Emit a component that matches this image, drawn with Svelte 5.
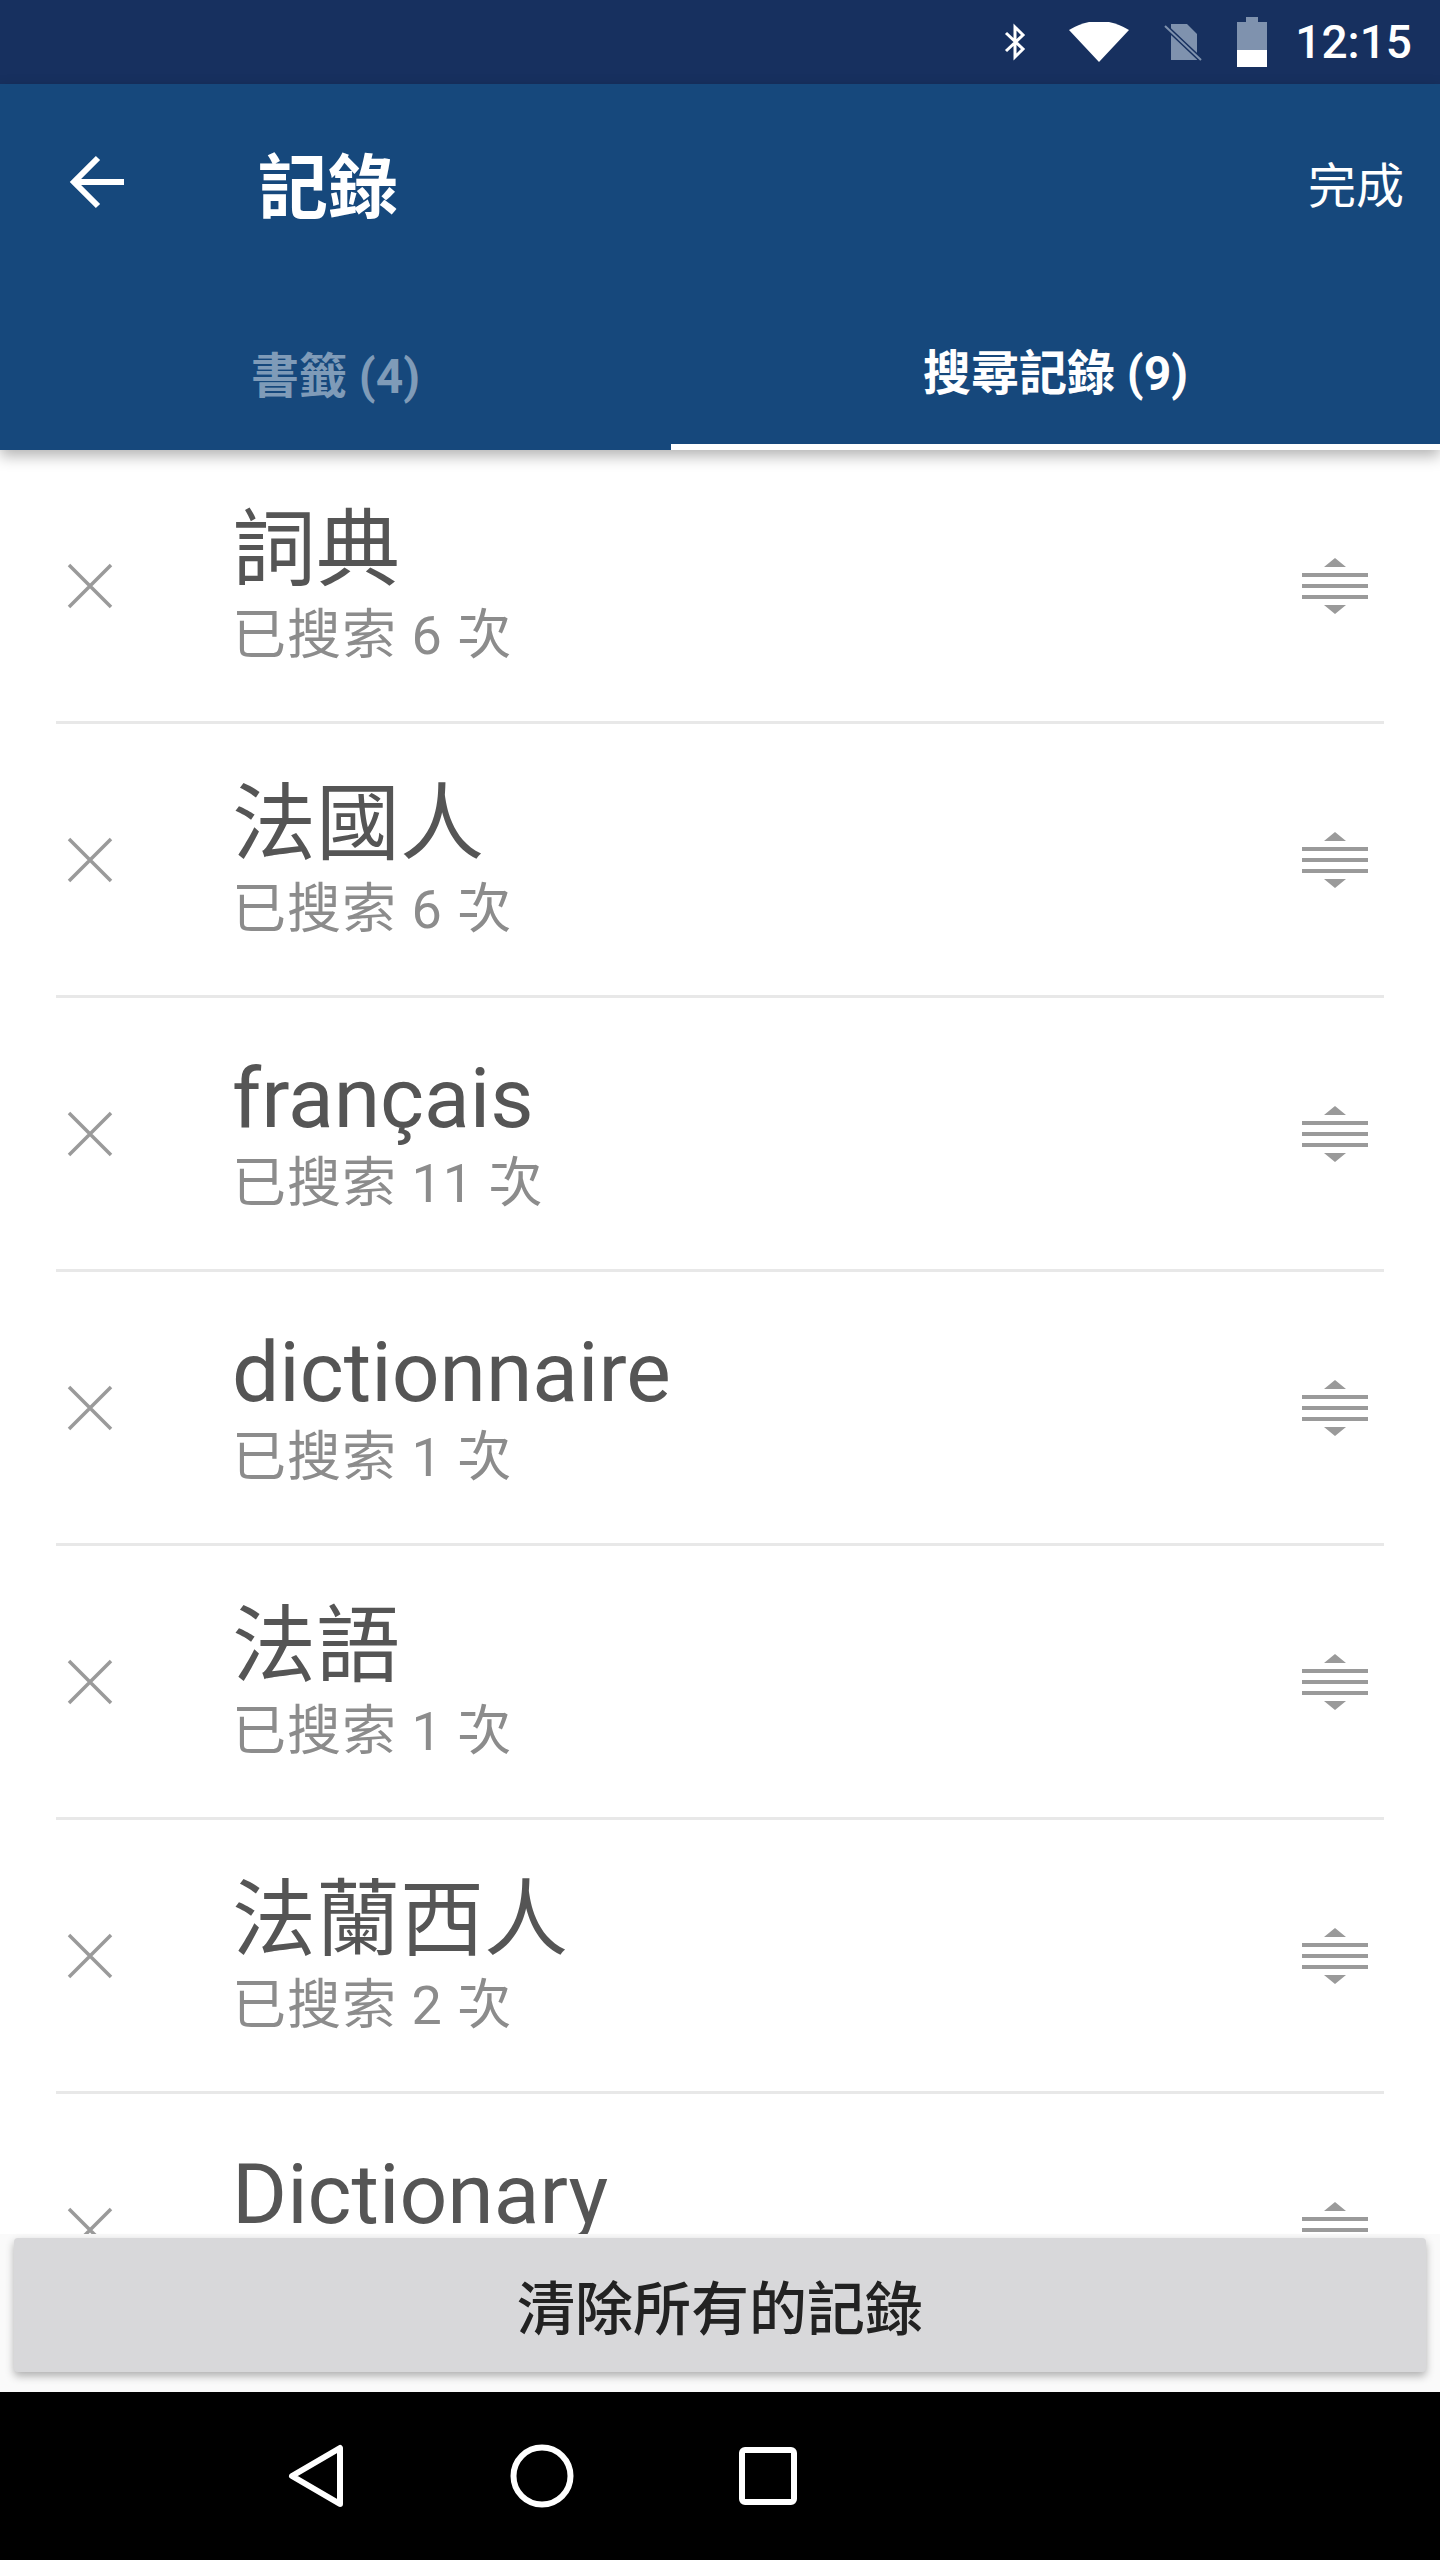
<script lang="ts">
	const rows = [
		{ word: '詞典', count: 6 },
		{ word: '法國人', count: 6 },
		{ word: 'français', count: 11 },
		{ word: 'dictionnaire', count: 1 },
		{ word: '法語', count: 1 },
		{ word: '法蘭西人', count: 2 },
		{ word: 'Dictionary', count: 1 }
	];
</script>

<div class="phone">
	<div class="status">
		<svg class="bt" viewBox="0 0 24 40" width="24" height="40"><path d="M3 11 L20 27 L12 35 V5 L20 13 L3 29" fill="none" stroke="#fff" stroke-width="3"/></svg>
		<svg class="wifi" viewBox="0 0 60 40" width="60" height="40"><path d="M0 8 Q30 -10 60 8 L30 40 Z" fill="#fff"/></svg>
		<svg class="sim" viewBox="0 0 44 44" width="44" height="44"><path d="M10 4 H26 L36 14 V40 H10 Z" fill="#7f92ae"/><path d="M4 6 L40 40" stroke="#17305f" stroke-width="5"/><path d="M4 6 L40 40" stroke="#7f92ae" stroke-width="2"/></svg>
		<svg class="batt" viewBox="0 0 34 50" width="34" height="50"><path d="M11 0 H23 V5 H32 V50 H2 V5 H11 Z" fill="#7f92ae"/><rect x="2" y="33" width="30" height="17" fill="#fff"/></svg>
		<span class="time">12:15</span>
	</div>
	<header class="bar">
		<div class="top">
			<svg class="back" viewBox="0 0 60 60" width="60" height="60"><path d="M56 30 H8 M30 6 L6 30 L30 54" fill="none" stroke="#fff" stroke-width="6"/></svg>
			<h1>記錄</h1>
			<span class="done">完成</span>
		</div>
		<div class="tabs">
			<div class="tab">書籤 (4)</div>
			<div class="tab active">搜尋記錄 (9)</div>
		</div>
	</header>
	<main class="list">
		{#each rows as row}
			<div class="row">
				<svg class="x" viewBox="0 0 48 48" width="48" height="48"><path d="M3 3 L45 45 M45 3 L3 45" stroke="#9a9a9a" stroke-width="3.5"/></svg>
				<div class="text">
					<div class="word">{row.word}</div>
					<div class="count">已搜索 {row.count} 次</div>
				</div>
				<svg class="drag" viewBox="0 0 66 60" width="66" height="60"><path d="M22 11 L33 2 L44 11 Z M22 49 L33 58 L44 49 Z" fill="#9a9a9a"/><path d="M0 19 H66 M0 30 H66 M0 41 H66" stroke="#9a9a9a" stroke-width="4"/></svg>
			</div>
		{/each}
		<div class="clear-wrap">
			<button class="clear">清除所有的記錄</button>
		</div>
	</main>
	<nav class="nav">
		<svg viewBox="0 0 60 64" width="60" height="64"><path d="M54 4 V60 L6 32 Z" fill="none" stroke="#fff" stroke-width="6" stroke-linejoin="round"/></svg>
		<svg viewBox="0 0 64 64" width="64" height="64"><circle cx="32" cy="32" r="28.5" fill="none" stroke="#fff" stroke-width="6"/></svg>
		<svg viewBox="0 0 60 60" width="60" height="60"><rect x="4" y="4" width="52" height="52" rx="3" fill="none" stroke="#fff" stroke-width="6"/></svg>
	</nav>
</div>

<style>
	:global(body) {
		margin: 0;
		background: #000;
	}

	.phone {
		width: 1440px;
		height: 2560px;
		display: flex;
		flex-direction: column;
		overflow: hidden;
		background: #fff;
		font-family: Roboto, "Noto Sans CJK TC", sans-serif;
	}

	.status {
		height: 84px;
		flex: none;
		background: #17305f;
		display: flex;
		align-items: center;
		justify-content: flex-end;
		padding-right: 28px;
		box-sizing: border-box;
	}

	.bt { margin-right: 42px; }
	.wifi { margin-right: 32px; }
	.sim { margin-right: 30px; }
	.batt { margin-right: 26px; }

	.time {
		color: #fff;
		font-size: 46px;
		font-weight: 500;
	}

	.bar {
		height: 366px;
		flex: none;
		box-sizing: border-box;
		background: #16487c;
		display: flex;
		flex-direction: column;
		justify-content: space-between;
		position: relative;
		z-index: 2;
		box-shadow: 0 6px 14px rgba(0, 0, 0, .3);
	}

	.top {
		height: 196px;
		display: flex;
		align-items: center;
		padding: 0 36px 0 68px;
		color: #fff;
	}

	h1 {
		margin: 0 0 0 130px;
		font-size: 70px;
		font-weight: 700;
		flex: 1;
	}

	.done { font-size: 48px; }

	.tabs {
		display: grid;
		grid-template-columns: 671px 1fr;
	}

	.tab {
		height: 156px;
		box-sizing: border-box;
		display: flex;
		align-items: center;
		justify-content: center;
		font-size: 48px;
		font-weight: 700;
		color: #7f9bb8;
	}

	.tab.active {
		color: #fff;
		border-bottom: 6px solid #fff;
	}

	.list {
		flex: 1;
		position: relative;
		overflow: hidden;
	}

	.row {
		height: 274px;
		margin: 0 56px;
		box-sizing: border-box;
		border-bottom: 3px solid #e8e8e8;
		display: flex;
		align-items: center;
		position: relative;
	}

	.x { margin: 0 0 0 10px; flex: none; }

	.text {
		margin-left: 118px;
		flex: 1;
	}

	.word {
		font-size: 84px;
		line-height: 100px;
		color: #555;
	}

	.count {
		font-size: 54px;
		line-height: 70px;
		color: #8c8c8c;
		letter-spacing: 1px;
	}

	.drag { margin-right: 16px; flex: none; }

	.clear-wrap {
		position: absolute;
		left: 0;
		right: 0;
		bottom: 0;
		height: 158px;
		background: #fafafa;
		padding: 4px 14px 20px;
		box-sizing: border-box;
	}

	.clear {
		width: 100%;
		height: 100%;
		border: none;
		border-radius: 4px;
		background: #d8d8da;
		color: #222;
		font-family: inherit;
		font-size: 58px;
		font-weight: 500;
		box-shadow: 0 4px 8px rgba(0, 0, 0, .3);
	}

	.nav {
		height: 168px;
		flex: none;
		background: #000;
		display: flex;
		align-items: center;
		padding-left: 286px;
		gap: 164px;
	}
</style>
